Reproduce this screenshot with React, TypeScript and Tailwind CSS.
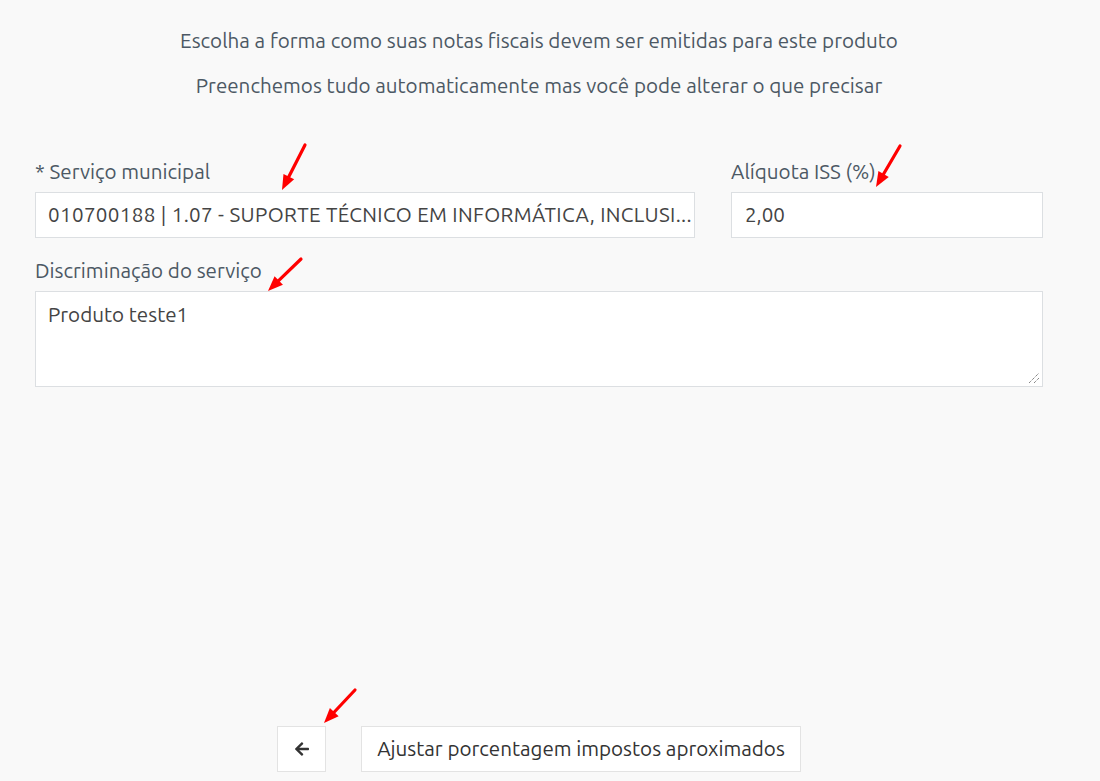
import React from "react";

function Arrow({ x1, y1, x2, y2 }: { x1: number; y1: number; x2: number; y2: number }) {
  const dx = x2 - x1;
  const dy = y2 - y1;
  const len = Math.sqrt(dx * dx + dy * dy);
  const ux = dx / len;
  const uy = dy / len;
  const headLen = 15;
  const headW = 6;
  const bx = x2 - ux * headLen;
  const by = y2 - uy * headLen;
  const px = -uy;
  const py = ux;
  return (
    <g>
      <line x1={x1} y1={y1} x2={bx + ux * 2} y2={by + uy * 2} stroke="#ff0000" strokeWidth={3.2} strokeLinecap="round" />
      <polygon
        points={`${x2},${y2} ${bx + px * headW},${by + py * headW} ${bx - px * headW},${by - py * headW}`}
        fill="#ff0000"
      />
    </g>
  );
}

export default function App() {
  const font = { fontFamily: "Ubuntu, 'Noto Sans', 'Open Sans', sans-serif" };
  return (
    <div className="relative min-h-screen w-full bg-[#f9f9f9] flex flex-col" style={font}>
      <div className="mx-[35px] w-[1008px] pt-[26px] text-center text-[20.6px] leading-[30px] text-[#4c5864]">
        <p>Escolha a forma como suas notas fiscais devem ser emitidas para este produto</p>
        <p className="mt-[15px]">Preenchemos tudo automaticamente mas você pode alterar o que precisar</p>
      </div>

      <div className="mx-[35px] w-[1008px] mt-[58px]">
        <div className="grid grid-cols-[660px_312px] gap-x-[36px]">
          <div>
            <label className="block text-[20.6px] leading-[26px] text-[#4c5864]">* Serviço municipal</label>
            <div className="mt-[7px] h-[46px] border border-[#dcdfe2] bg-white pl-[12px] pr-[2px] flex items-center text-[20.6px] tracking-[0.35px] text-[#444] overflow-hidden whitespace-nowrap">
              <span>010700188 | 1.07 - SUPORTE TÉCNICO EM INFORMÁTICA, INCLUSI...</span>
            </div>
          </div>
          <div>
            <label className="block text-[20.6px] leading-[26px] text-[#4c5864]">Alíquota ISS (%)</label>
            <div className="mt-[7px] h-[46px] border border-[#dcdfe2] bg-white px-[13px] flex items-center text-[20.6px] text-[#444]">
              2,00
            </div>
          </div>
        </div>

        <label className="mt-[20px] block text-[20.6px] leading-[26px] text-[#4c5864]">Discriminação do serviço</label>
        <div className="relative mt-[7px] h-[96px] border border-[#dcdfe2] bg-white px-[12px] pt-[8px] text-[20.6px] leading-[30px] text-[#444]">
          Produto teste1
          <svg className="absolute right-[2px] bottom-[2px]" width="12" height="12" viewBox="0 0 12 12">
            <line x1="1" y1="11" x2="11" y2="1" stroke="#555" strokeWidth="1" strokeDasharray="1 1" />
            <line x1="6" y1="11" x2="11" y2="6" stroke="#555" strokeWidth="1" strokeDasharray="1 1" />
          </svg>
        </div>
      </div>

      <div className="mt-auto mb-[9px] mx-[35px] w-[1008px] flex justify-center gap-[35px]">
        <button className="w-[49px] h-[46px] border border-[#e3e3e3] bg-white flex items-center justify-center">
          <svg width="16" height="16" viewBox="0 0 448 512" fill="#333">
            <path d="M257.5 445.1l-22.2 22.2c-9.4 9.4-24.6 9.4-33.9 0L7 273c-9.4-9.4-9.4-24.6 0-33.9L201.4 44.7c9.4-9.4 24.6-9.4 33.9 0l22.2 22.2c9.5 9.5 9.3 25-.4 34.3L136.6 216H424c13.3 0 24 10.7 24 24v32c0 13.3-10.7 24-24 24H136.6l120.5 114.8c9.8 9.3 10 24.8.4 34.3z" />
          </svg>
        </button>
        <button className="w-[440px] h-[46px] border border-[#e3e3e3] bg-white text-[20.6px] text-[#333]">
          Ajustar porcentagem impostos aproximados
        </button>
      </div>

      <svg className="absolute inset-0 pointer-events-none" width="1100" height="781">
        <Arrow x1={305} y1={145} x2={282} y2={190} />
        <Arrow x1={900} y1={146} x2={876} y2={187} />
        <Arrow x1={301} y1={259} x2={268} y2={291} />
        <Arrow x1={355} y1={690} x2={324} y2={723} />
      </svg>
    </div>
  );
}
